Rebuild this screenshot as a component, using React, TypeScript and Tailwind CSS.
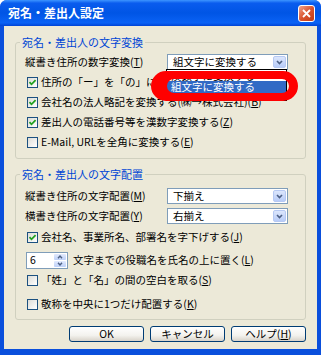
import React from "react";

function Check({ checked }: { checked?: boolean }) {
  return (
    <span className="flex h-[11px] w-[11px] shrink-0 items-center justify-center border border-[#1C5180] bg-[linear-gradient(135deg,#DCDCD7,#FFFFFF)]">
      {checked ? (
        <svg width="9" height="9" viewBox="0 0 9 9">
          <path d="M1.5 4.2 L3.5 6.3 L7.6 2.1" stroke="#21A121" strokeWidth="1.8" fill="none" />
        </svg>
      ) : null}
    </span>
  );
}

function Select({ value }: { value: string }) {
  return (
    <div className="flex h-[16px] w-[121px] shrink-0 items-center border border-[#7F9DB9] bg-white">
      <span className="flex-1 truncate pl-[5px]">{value}</span>
      <span className="mr-[1px] flex h-[12px] w-[13px] items-center justify-center rounded-[2px] border border-[#B6C9F3] bg-[linear-gradient(to_bottom,#DCE6FC,#B8CCF8)]">
        <svg width="7" height="5" viewBox="0 0 7 5">
          <path d="M1 1 L3.5 3.6 L6 1" stroke="#4D6185" strokeWidth="1.6" fill="none" />
        </svg>
      </span>
    </div>
  );
}

function CheckRow({ checked, children }: { checked?: boolean; children: React.ReactNode }) {
  return (
    <div className="flex h-[20px] items-center gap-[3px] whitespace-nowrap pl-[2px]">
      <Check checked={checked} />
      <span>{children}</span>
    </div>
  );
}

function Button({ children }: { children: React.ReactNode }) {
  return (
    <button className="flex h-[16px] w-[75px] items-center justify-center rounded-[3px] border border-[#003C74] bg-[linear-gradient(to_bottom,#FFFFFF,#F3F2EE_60%,#D8D3C9)] text-[10.5px] leading-[12px]">
      {children}
    </button>
  );
}

export default function App() {
  return (
    <div className="relative h-[355px] w-[321px] overflow-hidden rounded-t-[7px] bg-[#0A4FDC] font-[family-name:'Noto_Sans_CJK_JP',sans-serif] text-[10.5px] leading-[12px] text-black">
      {/* title bar */}
      <div className="flex h-[26px] items-center justify-between bg-[linear-gradient(to_bottom,#3D95FF,#0A5CEE_12%,#0055E5_50%,#0A62F5_88%,#0043D5)] pl-[8px] pr-[6px]">
        <span className="text-[12px] font-bold leading-[14px] text-white">宛名・差出人設定</span>
        <span className="flex h-[17px] w-[17px] items-center justify-center rounded-[3px] border border-white bg-[linear-gradient(135deg,#F0A48C,#DA5530_50%,#C03A14)]">
          <svg width="9" height="9" viewBox="0 0 9 9">
            <path d="M1 1 L8 8 M8 1 L1 8" stroke="white" strokeWidth="1.8" />
          </svg>
        </span>
      </div>

      {/* body */}
      <div className="mx-[4px] flex h-[323px] flex-col bg-[#ECE9D8]">
        <fieldset className="mx-[11px] mt-[10px] rounded-[3px] border border-[#D0D0BF] pb-[6px] pl-[9px] pr-[17px]">
          <legend className="ml-[-5px] px-[2px] text-[11px] leading-[12px] text-[#0046D5]">宛名・差出人の文字変換</legend>
          <div className="mt-[4px] flex h-[20px] items-center justify-between whitespace-nowrap">
            <span>
              縦書き住所の数字変換(<u>T</u>)
            </span>
            <Select value="組文字に変換する" />
          </div>
          <CheckRow checked>
            住所の「ー」を「の」に変換する(<u>N</u>)
          </CheckRow>
          <CheckRow checked>
            会社名の法人略記を変換する(㈱→株式会社)(<u>B</u>)
          </CheckRow>
          <CheckRow checked>
            差出人の電話番号等を漢数字変換する(<u>Z</u>)
          </CheckRow>
          <CheckRow>
            E-Mail, URLを全角に変換する(<u>E</u>)
          </CheckRow>
        </fieldset>

        <fieldset className="mx-[11px] mt-[9px] rounded-[3px] border border-[#D0D0BF] pb-[5px] pl-[9px] pr-[17px]">
          <legend className="ml-[-5px] px-[2px] text-[11px] leading-[12px] text-[#0046D5]">宛名・差出人の文字配置</legend>
          <div className="mt-[6px] flex h-[20px] items-center justify-between whitespace-nowrap">
            <span>
              縦書き住所の文字配置(<u>M</u>)
            </span>
            <Select value="下揃え" />
          </div>
          <div className="flex h-[20px] items-center justify-between whitespace-nowrap">
            <span>
              横書き住所の文字配置(<u>Y</u>)
            </span>
            <Select value="右揃え" />
          </div>
          <div className="mt-[1px]">
            <CheckRow checked>
              会社名、事業所名、部署名を字下げする(<u>J</u>)
            </CheckRow>
          </div>
          <div className="mt-[3px] flex h-[20px] items-center gap-[5px] whitespace-nowrap pl-[1px]">
            <div className="flex h-[17px] w-[42px] items-stretch border border-[#7F9DB9] bg-white">
              <span className="flex flex-1 items-center pl-[3px]">6</span>
              <div className="flex w-[14px] flex-col gap-[1px] p-[1px]">
                <span className="flex flex-1 items-center justify-center rounded-[1px] bg-[linear-gradient(to_bottom,#E2EAFD,#BDD0F8)]">
                  <svg width="6" height="4" viewBox="0 0 6 4">
                    <path d="M1 3.2 L3 1 L5 3.2" stroke="#4D6185" strokeWidth="1.4" fill="none" />
                  </svg>
                </span>
                <span className="flex flex-1 items-center justify-center rounded-[1px] bg-[linear-gradient(to_bottom,#E2EAFD,#BDD0F8)]">
                  <svg width="6" height="4" viewBox="0 0 6 4">
                    <path d="M1 0.8 L3 3 L5 0.8" stroke="#4D6185" strokeWidth="1.4" fill="none" />
                  </svg>
                </span>
              </div>
            </div>
            <span>
              文字までの役職名を氏名の上に置く(<u>L</u>)
            </span>
          </div>
          <CheckRow>
            「姓」と「名」の間の空白を取る(<u>S</u>)
          </CheckRow>
          <div className="mt-[4px]">
            <CheckRow>
              敬称を中央に1つだけ配置する(<u>K</u>)
            </CheckRow>
          </div>
        </fieldset>

        <div className="mr-[11px] mt-[6px] flex justify-end gap-[6px]">
          <Button>OK</Button>
          <Button>キャンセル</Button>
          <Button>
            ヘルプ(<u>H</u>)
          </Button>
        </div>
      </div>

      {/* open dropdown list */}
      <div className="absolute left-[166px] top-[69px] flex h-[32px] w-[121px] flex-col overflow-hidden border border-black bg-white">
        <div className="h-[11px] shrink-0 pl-[4px] leading-[11px]">漢数字に変換する</div>
        <div className="h-[12px] shrink-0 bg-[#316AC5] pl-[4px] text-white">組文字に変換する</div>
        <div className="h-[12px] shrink-0 pl-[4px]">変換しない</div>
      </div>

      {/* red annotation */}
      <svg className="pointer-events-none absolute left-0 top-0" width="321" height="355" viewBox="0 0 321 355">
        <path
          fillRule="evenodd"
          fill="#FF0000"
          d="M166 71 H283 A15 15 0 0 1 283 101 H166 A15 15 0 0 1 166 71 Z M174 79 H282 A7 7 0 0 1 282 93 H174 A7 7 0 0 1 174 79 Z"
        />
      </svg>
    </div>
  );
}
